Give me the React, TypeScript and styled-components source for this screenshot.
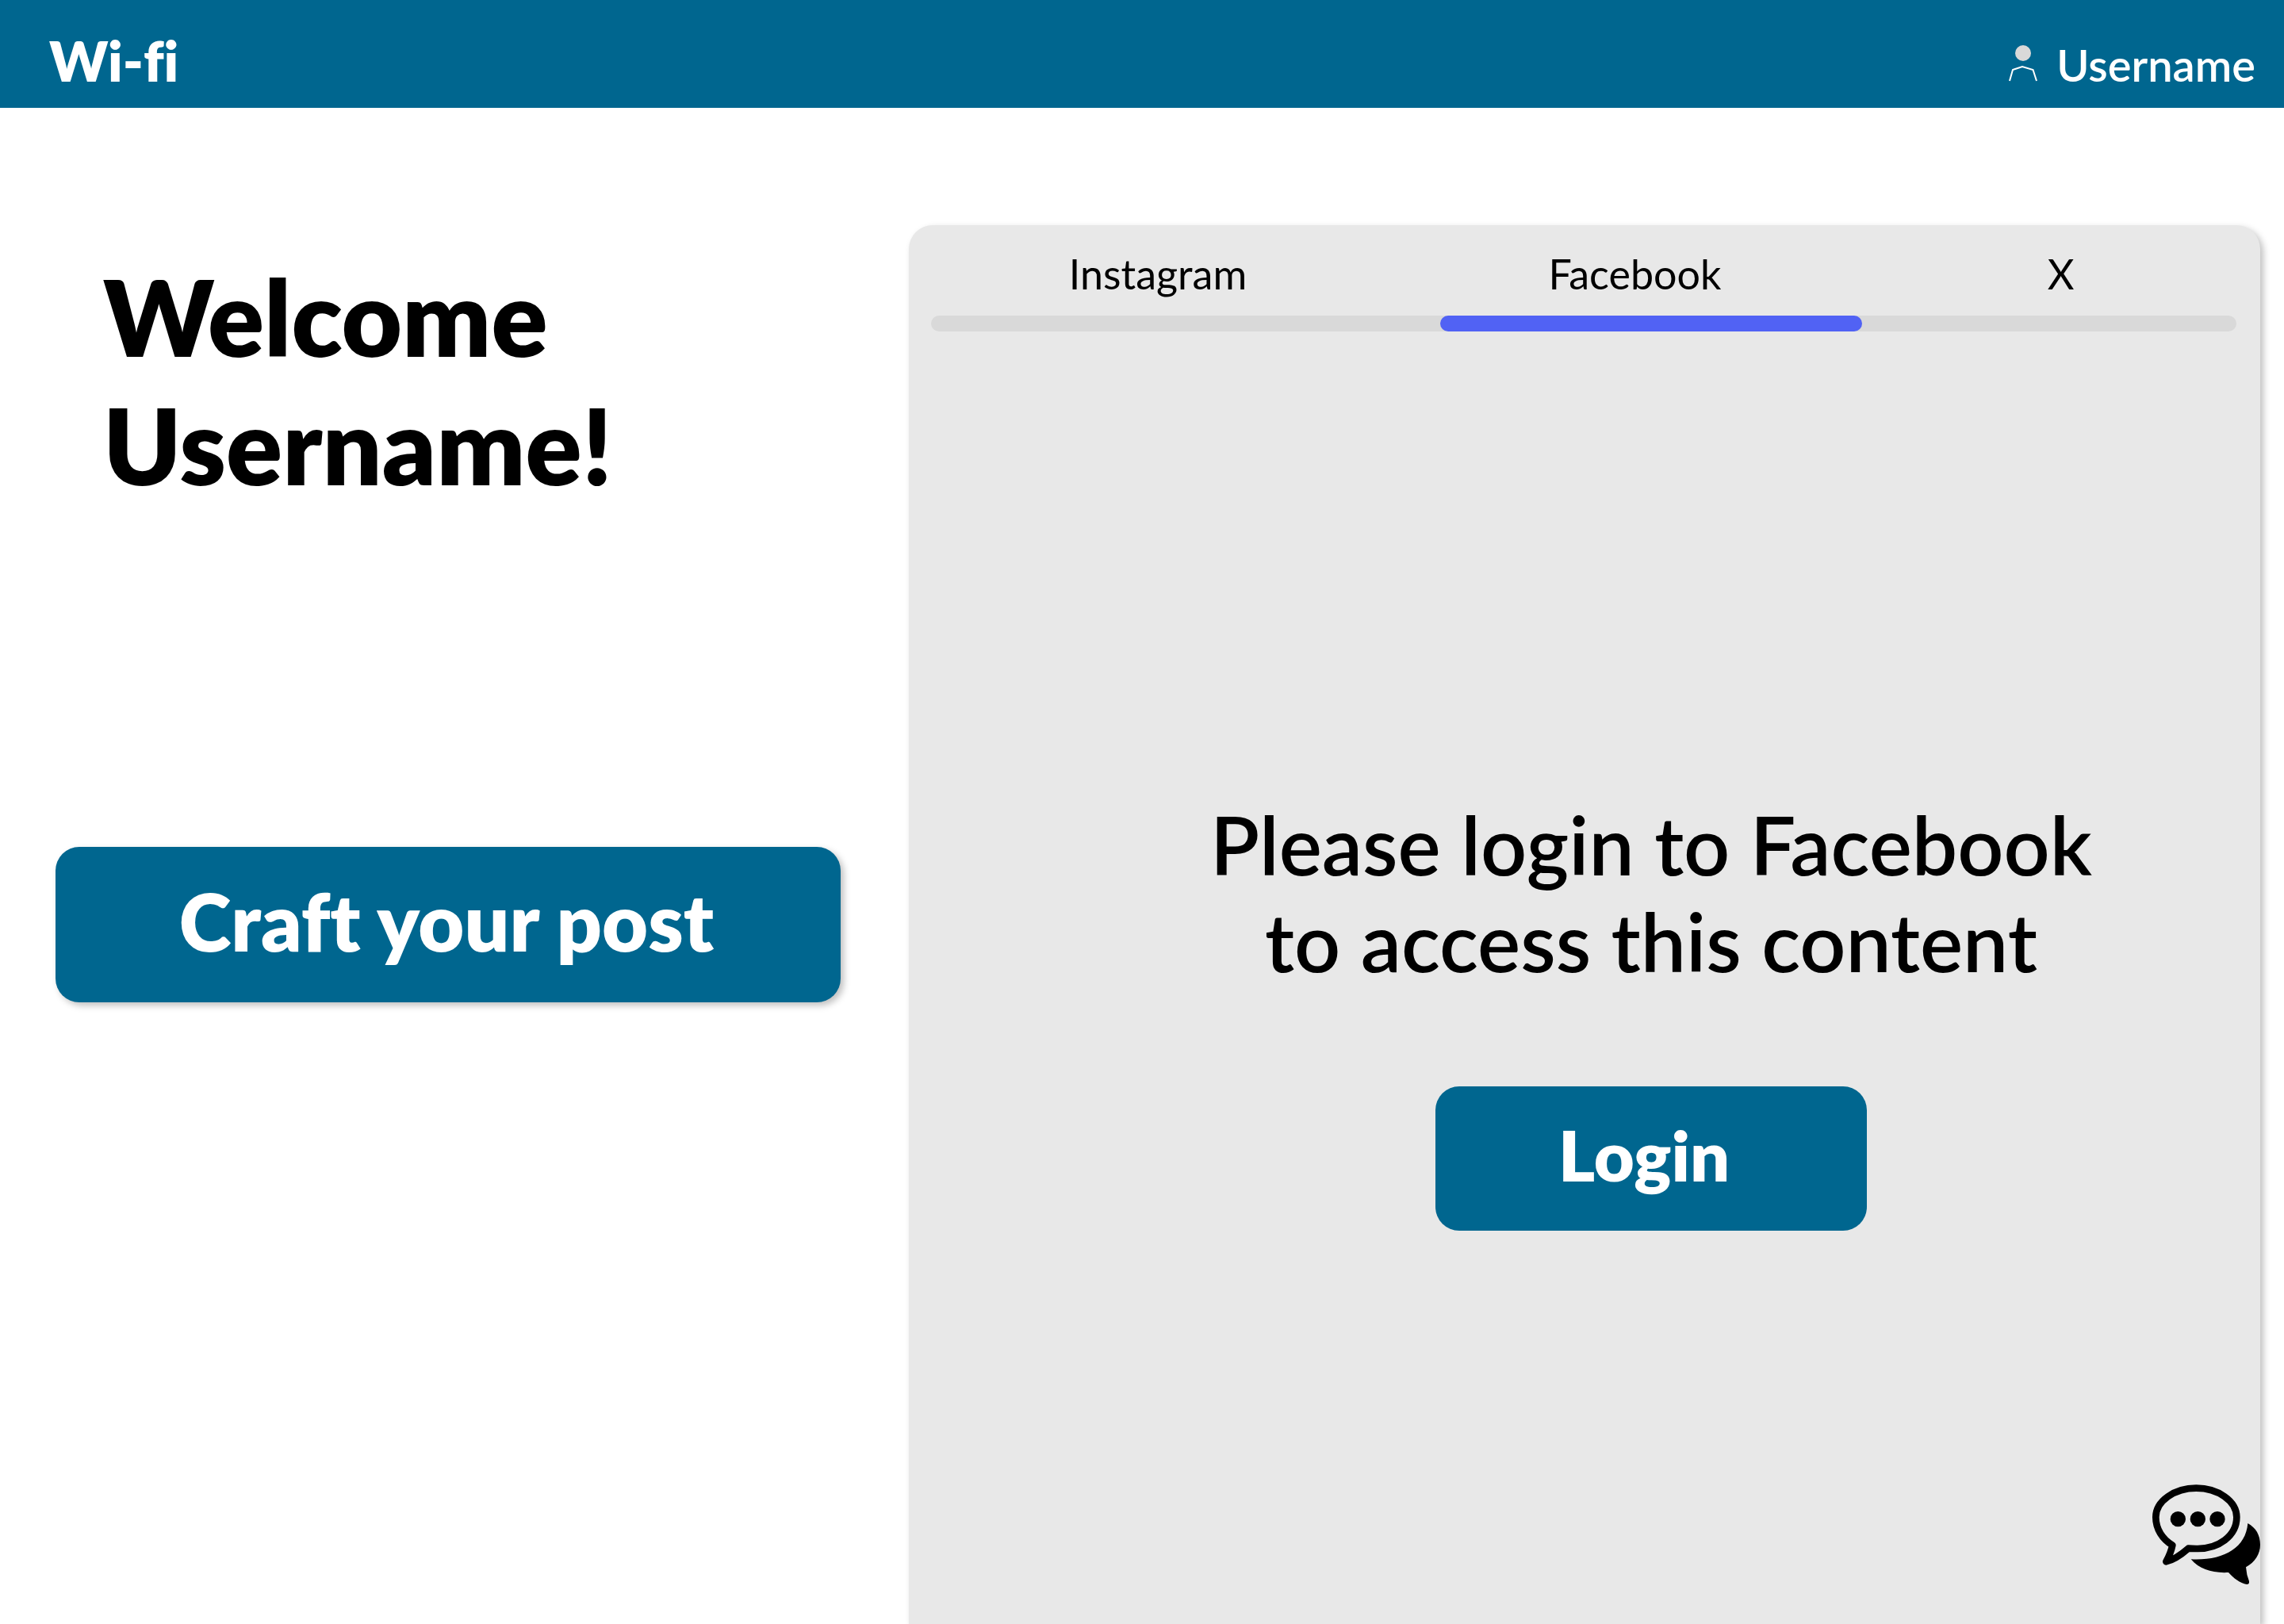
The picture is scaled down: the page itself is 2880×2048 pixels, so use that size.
import React, { useState } from "react";
import styled, { createGlobalStyle } from "styled-components";

const GlobalStyle = createGlobalStyle`
  *, *::before, *::after { box-sizing: border-box; }
  body {
    margin: 0;
    background: #ffffff;
    color: #000000;
    font-family: Lato, "Open Sans", "Liberation Sans", sans-serif;
    font-variant-ligatures: none;
  }
  button { font-family: inherit; font-variant-ligatures: inherit; border: 0; cursor: pointer; }
`;

const Page = styled.div`
  min-height: 100vh;
  display: flex;
  flex-direction: column;
`;

const Header = styled.header`
  min-height: 136px;
  padding: 34px 36px 0 62px;
  display: flex;
  align-items: baseline;
  justify-content: space-between;
  background: #00668f;
  color: #ffffff;
`;

const Brand = styled.a`
  color: inherit;
  text-decoration: none;
  font-size: 70px;
  line-height: 84px;
  font-weight: 800;
`;

const Account = styled.a`
  display: flex;
  align-items: baseline;
  gap: 24px;
  color: inherit;
  text-decoration: none;
  font-size: 56px;
  line-height: 68px;
  font-weight: 600;
`;

const PersonIcon = styled.svg`
  width: 38px;
  height: 46px;
`;

const Main = styled.main`
  flex: 1;
  display: grid;
  grid-template-columns: 990fr 1704fr;
  column-gap: 86px;
  padding: 148px 30px 0 70px;
`;

const Intro = styled.section`
  padding-top: 34px;
`;

const Welcome = styled.h1`
  margin: 0;
  padding-left: 60px;
  font-size: 132px;
  line-height: 162px;
  font-weight: 800;
`;

const PrimaryButton = styled.button<{ $raised?: boolean }>`
  display: block;
  border-radius: 30px;
  background: #00668f;
  color: #ffffff;
  font-weight: 800;
  box-shadow: ${(p) => (p.$raised ? "4px 4px 8px rgba(0, 0, 0, 0.25)" : "none")};
`;

const CraftButton = styled(PrimaryButton)`
  width: 100%;
  height: 196px;
  margin-top: 426px;
  padding: 0 4px 10px 0;
  font-size: 100px;
`;

const Panel = styled.section`
  padding: 32px 30px 0 28px;
  border-radius: 30px 30px 0 0;
  background: #e8e8e8;
  box-shadow: 4px 4px 8px rgba(0, 0, 0, 0.25);
`;

const Tabs = styled.div`
  display: grid;
  grid-template-columns: 572fr 631fr 443fr;
`;

const Tab = styled.button`
  padding: 0;
  background: none;
  color: #000000;
  font-size: 52px;
  line-height: 58px;
`;

const Track = styled.div`
  display: grid;
  grid-template-columns: 642fr 532fr 472fr;
  margin-top: 24px;
  border-radius: 10px;
  background: #d9d9d9;
`;

const Thumb = styled.div<{ $column: number }>`
  grid-column: ${(p) => p.$column};
  height: 20px;
  border-radius: 10px;
  background: #5162f4;
`;

const Prompt = styled.div`
  display: flex;
  flex-direction: column;
  align-items: center;
  padding: 586px 0 0 170px;
`;

const Message = styled.p`
  margin: 0;
  font-size: 102px;
  line-height: 122px;
  font-weight: 600;
  text-align: center;
`;

const LoginButton = styled(PrimaryButton)`
  width: 544px;
  height: 182px;
  margin-top: 122px;
  padding: 0 18px 10px 0;
  font-size: 88px;
`;

const ChatButton = styled.button`
  position: fixed;
  right: 30px;
  bottom: 50px;
  padding: 0;
  background: none;
  color: #000000;
`;

const ChatIcon = styled.svg`
  display: block;
  width: 136px;
  height: 126px;
`;

const networks = ["Instagram", "Facebook", "X"];

export default function App() {
  const [active, setActive] = useState(1);

  return (
    <Page>
      <GlobalStyle />
      <Header>
        <Brand href="#">Wi-fi</Brand>
        <Account href="#account">
          <PersonIcon viewBox="0 0 38 46" aria-hidden="true">
            <circle cx="20" cy="10" r="10" fill="#d9d9d9" />
            <path d="M3 45 7 31 19 27 32.500 31 37 45" fill="none" stroke="#fff" strokeWidth="2" />
          </PersonIcon>
          Username
        </Account>
      </Header>
      <Main>
        <Intro>
          <Welcome>
            Welcome
            <br />
            Username!
          </Welcome>
          <CraftButton type="button" $raised>
            Craft your post
          </CraftButton>
        </Intro>
        <Panel>
          <Tabs role="tablist" aria-label="Networks">
            {networks.map((name, i) => (
              <Tab
                key={name}
                type="button"
                role="tab"
                aria-selected={i === active}
                onClick={() => setActive(i)}
              >
                {name}
              </Tab>
            ))}
          </Tabs>
          <Track>
            <Thumb $column={active + 1} />
          </Track>
          <Prompt role="tabpanel">
            <Message>
              Please login to {networks[active]}
              <br />
              to access this content
            </Message>
            <LoginButton type="button">Login</LoginButton>
          </Prompt>
        </Panel>
      </Main>
      <ChatButton type="button" aria-label="Open chat">
        <ChatIcon viewBox="0 0 408 378" aria-hidden="true">
          <path
            d="M166 14 C247 14 319 62 319 124 C319 195 250 245 166 243 Q148 243 136 242 C112 263 79 286 52 292 Q70 260 76 230 C38 207 13 169 13 124 C13 62 85 14 166 14 Z"
            fill="none"
            stroke="currentColor"
            strokeWidth="26"
            strokeLinejoin="round"
          />
          <circle cx="97" cy="131" r="29" fill="currentColor" />
          <circle cx="172" cy="131" r="29" fill="currentColor" />
          <circle cx="246" cy="131" r="29" fill="currentColor" />
          <path
            d="M361 147 C392 164 408 192 408 228 C408 264 388 294 354 313 Q356 342 366 366 Q368 378 357 378 C332 374 306 354 288 333 C226 336 180 322 146 283 C265 289 353 243 361 147 Z"
            fill="currentColor"
          />
        </ChatIcon>
      </ChatButton>
    </Page>
  );
}
